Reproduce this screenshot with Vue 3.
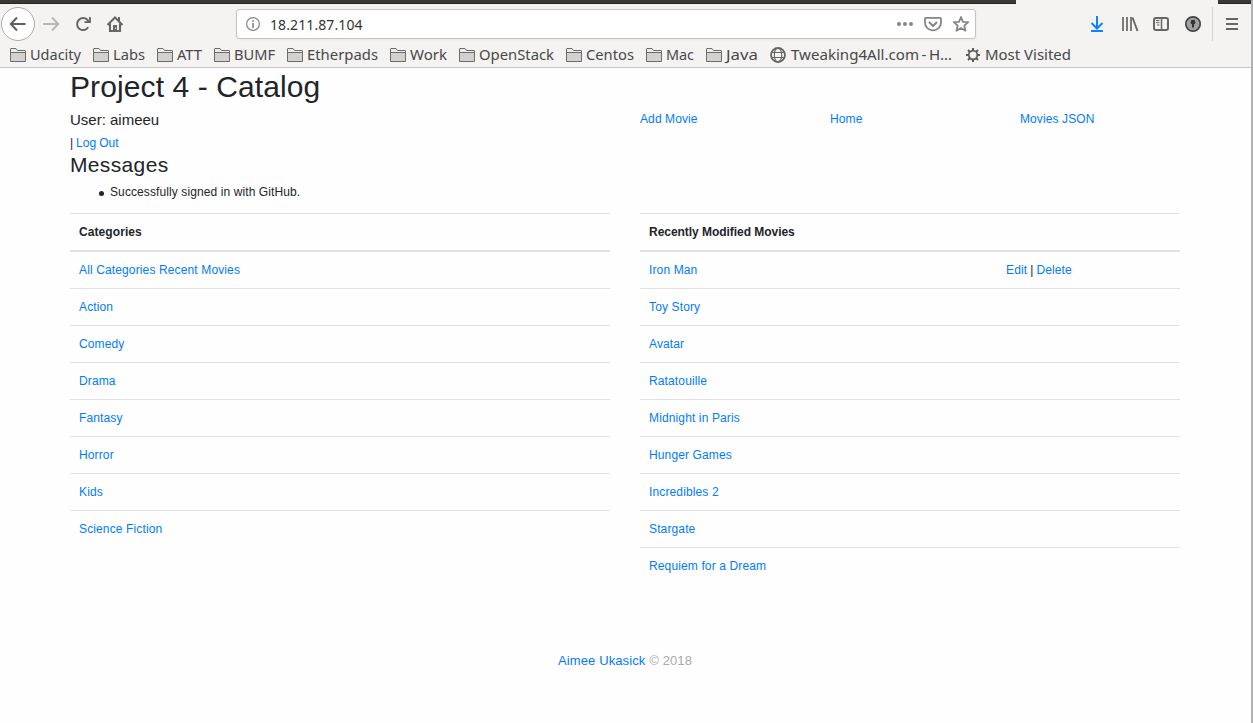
<script setup>
const bookmarks = [
  { label: 'Udacity', icon: 'folder', w: 83, t: 51 },
  { label: 'Labs', icon: 'folder', w: 64, t: 32 },
  { label: 'ATT', icon: 'folder', w: 57, t: 25 },
  { label: 'BUMF', icon: 'folder', w: 73, t: 41 },
  { label: 'Etherpads', icon: 'folder', w: 103, t: 71 },
  { label: 'Work', icon: 'folder', w: 69, t: 37 },
  { label: 'OpenStack', icon: 'folder', w: 107, t: 75 },
  { label: 'Centos', icon: 'folder', w: 80, t: 48 },
  { label: 'Mac', icon: 'folder', w: 60, t: 28 },
  { label: 'Java', icon: 'folder', w: 64, t: 32 },
  { label: 'Tweaking4All.com\u2009-\u2009H…', icon: 'globe', w: 195, t: 161 },
  { label: 'Most Visited', icon: 'gear', w: 110, t: 86 },
]
const categories = ['All Categories Recent Movies', 'Action', 'Comedy', 'Drama', 'Fantasy', 'Horror', 'Kids', 'Science Fiction']
const movies = ['Iron Man', 'Toy Story', 'Avatar', 'Ratatouille', 'Midnight in Paris', 'Hunger Games', 'Incredibles 2', 'Stargate', 'Requiem for a Dream']
</script>

<template>
  <div class="window">
    <header class="chrome">
      <div class="tabs"><i class="dark left"></i><i class="dark right"></i></div>
      <div class="toolbar">
        <svg class="nav" width="130" height="36" viewBox="0 0 130 36" fill="none">
          <circle cx="18" cy="18" r="16.5" fill="#fff" stroke="#aaa" />
          <path d="M25.5 18H11.5M17 11.5L10.8 18L17 24.5" stroke="#5f5f5e" stroke-width="2" />
          <path d="M43 18H58M52 11.5L58.2 18L52 24.5" stroke="#b8b7b5" stroke-width="2" />
          <path d="M88.200 21.300A6 6 0 1 1 87.300 13.800L89.500 16" stroke="#666665" stroke-width="2" />
          <path d="M90 11V16.200H84.500" stroke="#666665" stroke-width="1.800" />
          <path d="M107.500 19L115 11.500L122.500 19M110 17.500V25H120V17.500" stroke="#666665" stroke-width="2.100" />
          <path d="M118 11h2v4h-2z" fill="#666665" />
          <path d="M113 25V19H117V25z" fill="#666665" /><path d="M115 21.500h1v1.500h-1z" fill="#ddd" />
        </svg>
        <div class="url">
          <svg width="16" height="16" viewBox="0 0 16 16" fill="none">
            <circle cx="8" cy="8" r="6.400" stroke="#858585" stroke-width="1.200" />
            <path d="M8 7v5M8 4v1.800" stroke="#858585" stroke-width="1.600" />
          </svg>
          <span class="address">18.211.87.104</span>
          <svg class="actions" width="76" height="20" viewBox="0 0 76 20" fill="none" stroke="#858585" stroke-width="2">
            <g fill="#858585" stroke="none"><circle cx="4" cy="10" r="2" /><circle cx="10" cy="10" r="2" /><circle cx="16" cy="10" r="2" /></g>
            <path d="M31 4H45Q46 4 46 5V9A8 7.500 0 0 1 30 9V5Q30 4 31 4z" transform="translate(0 -.2)" stroke-width="1.800" />
            <path d="M34 8L38 12L42 8" />
            <path d="M66 3L68 7.800L73.200 8.200L69.300 11.700L70.500 16.700L66 14L61.500 16.700L62.700 11.700L58.800 8.200L64 7.800z" stroke-width="1.800" stroke-linejoin="round" />
          </svg>
        </div>
        <svg class="tools" width="165" height="36" viewBox="0 0 165 36" fill="none" stroke="#666665" stroke-width="2">
          <path d="M11 10V22M5.500 17L11 22.500L16.500 17M5 25H17" stroke="#0a84ff" />
          <path d="M37 11V25M41 11V25M45 11V25" stroke-width="1.700" /><path d="M46.500 11.500L51.500 25" stroke-width="1.900" />
          <rect x="68" y="12" width="14" height="12" rx="2" /><path d="M75.500 12V24" stroke-width="1.500" /><path d="M70 14.500H73.500M70 16.700H73.500M71 19H73.500" stroke-width="1" />
          <circle cx="107" cy="18" r="7.200" fill="#a0a0a0" stroke="#444" stroke-width="1.700" />
          <circle cx="107" cy="16.200" r="2.400" fill="#333" stroke="none" /><path d="M107 16V21.500" stroke="#333" />
          <path d="M126.500 1V35" stroke="#d4d3d2" stroke-width="1" />
          <path d="M140 13H152M140 18H152M140 23H152" />
        </svg>
      </div>
      <nav class="bookmarks">
        <a v-for="b in bookmarks" :key="b.label" class="bookmark" :style="{ width: b.w + 'px' }">
          <svg v-if="b.icon === 'folder'" width="16" height="16" viewBox="0 0 16 16">
            <path d="M.5 14.500V2Q.5 1.500 1 1.500H6L7.500 3.500H15Q15.500 3.500 15.500 4V14.500z" fill="#ececea" stroke="#6d6d6b" />
            <path d="M1 5.500H15V14H1z" fill="#d2d1cf" /><path d="M1 5.500H15" stroke="#6d6d6b" />
          </svg>
          <svg v-else-if="b.icon === 'globe'" width="16" height="16" viewBox="0 0 16 16" fill="none" stroke="#666" stroke-width="1.100">
            <circle cx="8" cy="8" r="7" stroke-width="1.800" /><ellipse cx="8" cy="8" rx="3.700" ry="7" /><path d="M1.500 5.500H14.500M1.500 10.500H14.500" />
          </svg>
          <svg v-else width="16" height="16" viewBox="0 0 16 16" fill="none" stroke="#5c5c5b">
            <circle cx="8" cy="8" r="4.300" stroke-width="1.700" />
            <path d="M8 1V3.500M8 12.500V15M1 8H3.500M12.500 8H15M3 3L5 5M11 11L13 13M13 3L11 5M5 11L3 13" stroke-width="2" />
          </svg>
          <svg class="label" :width="b.t + 2" height="22"><text :x="b.icon === 'globe' ? 1 : 0" y="16" :textLength="b.t" lengthAdjust="spacingAndGlyphs">{{ b.label }}</text></svg>
        </a>
      </nav>
    </header>

    <main class="container">
      <h1>Project 4 - Catalog</h1>
      <div class="top">
        <div class="user">
          <h5>User: aimeeu</h5>
          <div class="logout">| <a>Log Out</a></div>
        </div>
        <div class="links"><a>Add Movie</a><a>Home</a><a>Movies JSON</a></div>
      </div>
      <h3>Messages</h3>
      <ul><li>Successfully signed in with GitHub.</li></ul>
      <div class="tables">
        <section>
          <div class="head">Categories</div>
          <div v-for="c in categories" :key="c" class="row"><a>{{ c }}</a></div>
        </section>
        <section>
          <div class="head tight">Recently Modified Movies</div>
          <div v-for="(m, i) in movies" :key="m" class="row">
            <a class="title">{{ m }}</a>
            <span v-if="i === 0" class="edit"><a>Edit</a> | <a>Delete</a></span>
          </div>
        </section>
      </div>
      <footer><a>Aimee Ukasick</a> © 2018</footer>
    </main>
  </div>
</template>

<style>
body { margin: 0; overflow: hidden; }
</style>

<style scoped>
* { box-sizing: border-box; }
.window { width: 1253px; height: 723px; background: #fefefe; border-right: 2px solid #b2b2b2; overflow: hidden; font: 12px/18px "Liberation Sans", Arial, sans-serif; color: #212529; }
.chrome { height: 68px; background: #f4f3f1; border-bottom: 1px solid #c8c7c5; font-family: "Noto Sans", sans-serif; }
.tabs { height: 4px; display: flex; justify-content: space-between; }
.dark { background: #3b3936; border-bottom: 1px solid #262522; }
.left { width: 1016px; }
.right { width: 33px; }
.toolbar { height: 40px; display: flex; align-items: flex-start; padding-top: 2px; }
.nav { flex: none; }
.url { margin: 3px 0 0 106px; width: 740px; height: 30px; flex: none; background: #fff; border: 1px solid #c5c4c2; border-radius: 3px; box-shadow: 0 1px 3px #0000000c; display: flex; align-items: center; padding: 0 4px 0 8px; }
.address { margin-left: 9px; padding-top: 1px; font-size: 14px; letter-spacing: 0.1px; color: #333; }
.actions { margin-left: auto; }
.tools { margin-left: 110px; flex: none; }
.bookmarks { display: flex; padding-left: 10px; height: 22px; }
.bookmark { display: flex; align-items: center; gap: 4px; flex: none; }
.bookmark svg { flex: none; }
.label { overflow: visible; }
.label text { font-size: 14.5px; fill: #484848; }
.container { width: 1110px; margin-left: 70px; }
a { color: #007bff; }
h1, h3, h5 { margin: 0; font-weight: normal; }
h1 { font-size: 30px; line-height: 36px; padding-top: 1px; height: 42px; letter-spacing: 0.1px; }
.top { display: flex; height: 42px; }
.user { width: 570px; flex: none; }
h5 { font-size: 15px; line-height: 18px; height: 24px; padding-top: 1px; }
.logout { word-spacing: -0.5px; letter-spacing: 0.06px; }
.links { display: flex; flex: none; letter-spacing: 0.1px; }
.links a { width: 190px; }
.links a:last-child { width: 160px; }
h3 { font-size: 21px; line-height: 25px; height: 31px; letter-spacing: 0.35px; }
ul { margin: 0 0 12px; padding-left: 28px; height: 18px; list-style: none; letter-spacing: 0.1px; }
li { display: flex; align-items: center; }
li::before { content: ""; width: 5px; height: 5px; margin: 2px 6px 0 1px; border-radius: 50%; background: #212529; }
.tables { display: flex; gap: 30px; height: 439px; }
section { width: 540px; }
.head { height: 39px; border-top: 1px solid #dee2e6; border-bottom: 2px solid #dee2e6; padding: 9px; font-weight: bold; letter-spacing: 0.08px; }
.tight { letter-spacing: -0.04px; }
.row { height: 37px; padding: 9px; border-top: 1px solid #dee2e6; display: flex; letter-spacing: 0.13px; }
.head + .row { height: 36px; border-top: 0; }
.title { width: 357px; }
.edit { word-spacing: -0.5px; }
footer { text-align: center; font-size: 13px; color: #aaa; letter-spacing: 0.12px; }
</style>
